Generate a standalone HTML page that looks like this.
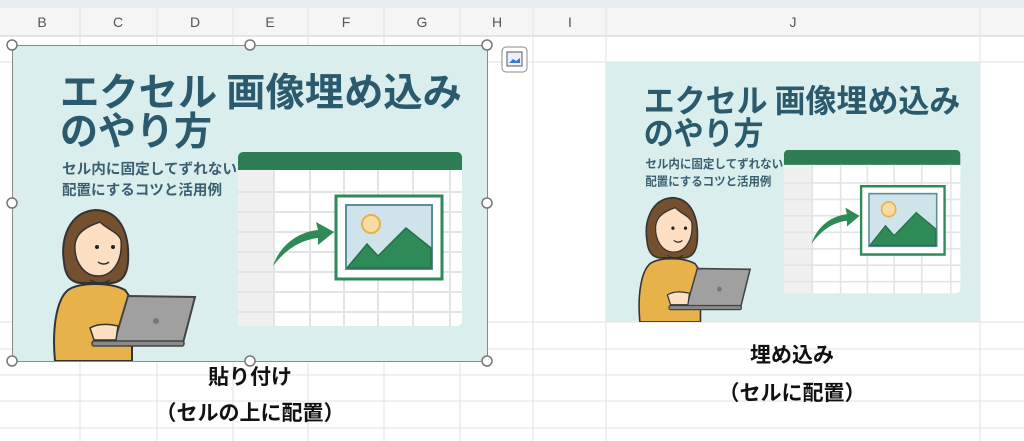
<!DOCTYPE html>
<html><head><meta charset="utf-8"><style>
html,body{margin:0;padding:0;background:#fff;width:1024px;height:441px;overflow:hidden;font-family:"Liberation Sans","Noto Sans CJK JP",sans-serif}
.lbl{position:absolute;font-weight:bold;font-size:21px;line-height:24px;color:#111;transform:translateX(-50%);white-space:nowrap;font-family:"Noto Sans CJK JP",sans-serif}
</style></head><body>
<svg width="1024" height="441" style="position:absolute;left:0;top:0" font-family="Liberation Sans, Noto Sans CJK JP, sans-serif">
<rect x="0" y="0" width="1024" height="8" fill="#e9ecef"/>
<rect x="0" y="8" width="1024" height="28" fill="#f5f5f5"/>
<line x1="0" y1="36" x2="1024" y2="36" stroke="#cfcfcf"/>
<g stroke="#e2e2e2">
<line x1="80" y1="8" x2="80" y2="441"/><line x1="157" y1="8" x2="157" y2="441"/><line x1="233" y1="8" x2="233" y2="441"/><line x1="308" y1="8" x2="308" y2="441"/><line x1="384" y1="8" x2="384" y2="441"/><line x1="460" y1="8" x2="460" y2="441"/><line x1="533" y1="8" x2="533" y2="441"/><line x1="606" y1="8" x2="606" y2="441"/><line x1="980" y1="8" x2="980" y2="441"/>
<line x1="0" y1="62" x2="1024" y2="62"/><line x1="0" y1="322" x2="1024" y2="322"/><line x1="0" y1="349" x2="1024" y2="349"/><line x1="0" y1="375" x2="1024" y2="375"/><line x1="0" y1="401" x2="1024" y2="401"/><line x1="0" y1="428" x2="1024" y2="428"/>
</g>
<g font-size="14" fill="#555" text-anchor="middle">
<text x="42" y="27">B</text><text x="118" y="27">C</text><text x="195" y="27">D</text><text x="270" y="27">E</text><text x="346" y="27">F</text><text x="422" y="27">G</text><text x="497" y="27">H</text><text x="570" y="27">I</text><text x="793" y="27">J</text>
</g>

<svg x="12" y="45" width="475" height="316" viewBox="12 45 475 316" preserveAspectRatio="none">
<rect x="12" y="45" width="475" height="316" fill="#dbeeee"/>
<text x="60" y="106" font-size="39" font-weight="bold" fill="#2b5a6d" textLength="402" lengthAdjust="spacingAndGlyphs" font-family="Noto Sans CJK JP, sans-serif">エクセル 画像埋め込み</text>
<text x="60" y="145" font-size="39" font-weight="bold" fill="#2b5a6d" textLength="152" lengthAdjust="spacingAndGlyphs" font-family="Noto Sans CJK JP, sans-serif">のやり方</text>
<text x="62" y="174" font-size="14.5" font-weight="bold" fill="#3b5f70" textLength="175" lengthAdjust="spacingAndGlyphs" font-family="Noto Sans CJK JP, sans-serif">セル内に固定してずれない</text>
<text x="62" y="195" font-size="14.5" font-weight="bold" fill="#3b5f70" textLength="160" lengthAdjust="spacingAndGlyphs" font-family="Noto Sans CJK JP, sans-serif">配置にするコツと活用例</text>
<rect x="238" y="152" width="224" height="174" rx="5" fill="#fff"/>
<rect x="238" y="170" width="36" height="156" fill="#f0f0f0"/>
<path d="M238 170V157a5 5 0 0 1 5-5h214a5 5 0 0 1 5 5v13z" fill="#2e7d55"/>
<g stroke="#e4e4e4" stroke-width="2">
<line x1="274" y1="170" x2="274" y2="326"/><line x1="310" y1="170" x2="310" y2="326"/><line x1="344" y1="170" x2="344" y2="326"/><line x1="378" y1="170" x2="378" y2="326"/><line x1="413" y1="170" x2="413" y2="326"/><line x1="450" y1="170" x2="450" y2="326"/>
<line x1="238" y1="192" x2="462" y2="192"/><line x1="238" y1="212" x2="462" y2="212"/><line x1="238" y1="232" x2="462" y2="232"/><line x1="238" y1="252" x2="462" y2="252"/><line x1="238" y1="272" x2="462" y2="272"/><line x1="238" y1="292" x2="462" y2="292"/><line x1="238" y1="312" x2="462" y2="312"/>
</g>
<rect x="336" y="196" width="106" height="83" fill="#fff" stroke="#2e8a57" stroke-width="3"/>
<rect x="346" y="205" width="86" height="64" fill="#cfe4ea" stroke="#5a8f99" stroke-width="2"/>
<circle cx="371" cy="224" r="9" fill="#f5dca0" stroke="#eab04a" stroke-width="2"/>
<path d="M347 268L367 244L378 256L406 228L431 248V268Z" fill="#2e8a57" stroke="#276e48" stroke-width="1.5"/>
<path d="M273 266C280 245 298 232 318 230L316 222L334 232L318 245L318 238C300 240 285 250 273 266Z" fill="#2e8a57"/>
<path d="M55 361C52 330 56 300 68 290C80 282 110 282 125 290L132 300V361Z" fill="#e8b24a" stroke="#333" stroke-width="2"/>
<path d="M64 262C60 238 70 212 95 210C118 210 130 230 128 262C127 275 122 282 112 283L80 283C70 282 65 275 64 262Z" fill="#74502e" stroke="#333" stroke-width="2"/>
<path d="M75 245C76 232 88 226 100 222C108 230 118 232 121 240C123 262 112 276 98 276C84 276 74 262 75 245Z" fill="#fde0c4" stroke="#333" stroke-width="1.5"/>
<circle cx="97" cy="247" r="2" fill="#222"/><circle cx="113" cy="247" r="2" fill="#222"/>
<path d="M98 262q6 4 11 0" fill="none" stroke="#333" stroke-width="1.5"/>
<path d="M90 280q10 6 20 0" fill="none" stroke="#333" stroke-width="1.5"/>
<path d="M128 296L195 297L183 343L114 343Z" fill="#a0a0a0" stroke="#444" stroke-width="2"/>
<circle cx="156" cy="321" r="3" fill="#777"/>
<rect x="92" y="341" width="92" height="5" rx="2" fill="#8a8a8a" stroke="#444" stroke-width="1.5"/>
<path d="M90 328Q100 322 118 326L116 340L94 340Z" fill="#fde0c4" stroke="#333" stroke-width="1.5"/>
</svg>
<rect x="12.5" y="45.5" width="475" height="316" fill="none" stroke="#8a8a8a" stroke-width="1"/>
<g fill="#fff" stroke="#777" stroke-width="1.5">
<circle cx="12" cy="45" r="5"/><circle cx="250" cy="45" r="5"/><circle cx="487" cy="45" r="5"/>
<circle cx="12" cy="203" r="5"/><circle cx="487" cy="203" r="5"/>
<circle cx="12" cy="361" r="5"/><circle cx="250" cy="361" r="5"/><circle cx="487" cy="361" r="5"/>
</g>
<rect x="502" y="47" width="25" height="25" rx="4" fill="#fff" stroke="#888"/>
<rect x="507" y="52" width="15" height="14" fill="#eef" stroke="#555"/>
<path d="M509 63l4-4 3 2 4-3v5h-11z" fill="#3a7bd5"/>

<svg x="606" y="62" width="374" height="260" viewBox="12 45 475 316" preserveAspectRatio="none">
<rect x="12" y="45" width="475" height="316" fill="#dbeeee"/>
<text x="60" y="106" font-size="39" font-weight="bold" fill="#2b5a6d" textLength="402" lengthAdjust="spacingAndGlyphs" font-family="Noto Sans CJK JP, sans-serif">エクセル 画像埋め込み</text>
<text x="60" y="145" font-size="39" font-weight="bold" fill="#2b5a6d" textLength="152" lengthAdjust="spacingAndGlyphs" font-family="Noto Sans CJK JP, sans-serif">のやり方</text>
<text x="62" y="174" font-size="14.5" font-weight="bold" fill="#3b5f70" textLength="175" lengthAdjust="spacingAndGlyphs" font-family="Noto Sans CJK JP, sans-serif">セル内に固定してずれない</text>
<text x="62" y="195" font-size="14.5" font-weight="bold" fill="#3b5f70" textLength="160" lengthAdjust="spacingAndGlyphs" font-family="Noto Sans CJK JP, sans-serif">配置にするコツと活用例</text>
<rect x="238" y="152" width="224" height="174" rx="5" fill="#fff"/>
<rect x="238" y="170" width="36" height="156" fill="#f0f0f0"/>
<path d="M238 170V157a5 5 0 0 1 5-5h214a5 5 0 0 1 5 5v13z" fill="#2e7d55"/>
<g stroke="#e4e4e4" stroke-width="2">
<line x1="274" y1="170" x2="274" y2="326"/><line x1="310" y1="170" x2="310" y2="326"/><line x1="344" y1="170" x2="344" y2="326"/><line x1="378" y1="170" x2="378" y2="326"/><line x1="413" y1="170" x2="413" y2="326"/><line x1="450" y1="170" x2="450" y2="326"/>
<line x1="238" y1="192" x2="462" y2="192"/><line x1="238" y1="212" x2="462" y2="212"/><line x1="238" y1="232" x2="462" y2="232"/><line x1="238" y1="252" x2="462" y2="252"/><line x1="238" y1="272" x2="462" y2="272"/><line x1="238" y1="292" x2="462" y2="292"/><line x1="238" y1="312" x2="462" y2="312"/>
</g>
<rect x="336" y="196" width="106" height="83" fill="#fff" stroke="#2e8a57" stroke-width="3"/>
<rect x="346" y="205" width="86" height="64" fill="#cfe4ea" stroke="#5a8f99" stroke-width="2"/>
<circle cx="371" cy="224" r="9" fill="#f5dca0" stroke="#eab04a" stroke-width="2"/>
<path d="M347 268L367 244L378 256L406 228L431 248V268Z" fill="#2e8a57" stroke="#276e48" stroke-width="1.5"/>
<path d="M273 266C280 245 298 232 318 230L316 222L334 232L318 245L318 238C300 240 285 250 273 266Z" fill="#2e8a57"/>
<path d="M55 361C52 330 56 300 68 290C80 282 110 282 125 290L132 300V361Z" fill="#e8b24a" stroke="#333" stroke-width="2"/>
<path d="M64 262C60 238 70 212 95 210C118 210 130 230 128 262C127 275 122 282 112 283L80 283C70 282 65 275 64 262Z" fill="#74502e" stroke="#333" stroke-width="2"/>
<path d="M75 245C76 232 88 226 100 222C108 230 118 232 121 240C123 262 112 276 98 276C84 276 74 262 75 245Z" fill="#fde0c4" stroke="#333" stroke-width="1.5"/>
<circle cx="97" cy="247" r="2" fill="#222"/><circle cx="113" cy="247" r="2" fill="#222"/>
<path d="M98 262q6 4 11 0" fill="none" stroke="#333" stroke-width="1.5"/>
<path d="M90 280q10 6 20 0" fill="none" stroke="#333" stroke-width="1.5"/>
<path d="M128 296L195 297L183 343L114 343Z" fill="#a0a0a0" stroke="#444" stroke-width="2"/>
<circle cx="156" cy="321" r="3" fill="#777"/>
<rect x="92" y="341" width="92" height="5" rx="2" fill="#8a8a8a" stroke="#444" stroke-width="1.5"/>
<path d="M90 328Q100 322 118 326L116 340L94 340Z" fill="#fde0c4" stroke="#333" stroke-width="1.5"/>
</svg>
</svg>
<div class="lbl" style="left:250px;top:364px">貼り付け</div>
<div class="lbl" style="left:250px;top:400px">（セルの上に配置）</div>
<div class="lbl" style="left:792px;top:342px">埋め込み</div>
<div class="lbl" style="left:792px;top:380px">（セルに配置）</div>
</body></html>
